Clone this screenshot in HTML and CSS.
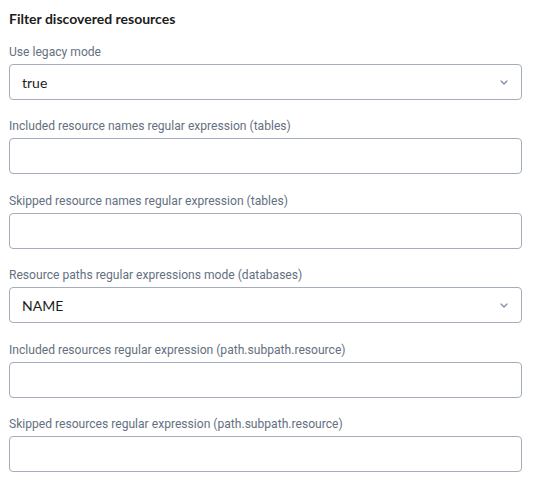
FILE: index.html
```html
<!DOCTYPE html>
<html>
<head>
<meta charset="utf-8">
<link rel="stylesheet" href="styles.css">
</head>
<body>
<div class="panel">
  <h3 class="title">Filter discovered resources</h3>
  <div class="fields">
    <div class="field">
      <label class="label">Use legacy mode</label>
      <div class="control select"><span class="value">true</span>
        <svg class="chev" width="8" height="5" viewBox="0 0 8 5"><path d="M1 1l3 3 3-3" fill="none" stroke="#7a8aa3" stroke-width="1.2" stroke-linecap="round" stroke-linejoin="round"/></svg>
      </div>
    </div>
    <div class="field">
      <label class="label">Included resource names regular expression (tables)</label>
      <div class="control"></div>
    </div>
    <div class="field">
      <label class="label">Skipped resource names regular expression (tables)</label>
      <div class="control"></div>
    </div>
    <div class="field">
      <label class="label">Resource paths regular expressions mode (databases)</label>
      <div class="control select"><span class="value">NAME</span>
        <svg class="chev" width="8" height="5" viewBox="0 0 8 5"><path d="M1 1l3 3 3-3" fill="none" stroke="#7a8aa3" stroke-width="1.2" stroke-linecap="round" stroke-linejoin="round"/></svg>
      </div>
    </div>
    <div class="field">
      <label class="label">Included resources regular expression (path.subpath.resource)</label>
      <div class="control"></div>
    </div>
    <div class="field">
      <label class="label">Skipped resources regular expression (path.subpath.resource)</label>
      <div class="control"></div>
    </div>
  </div>
</div>
</body>
</html>
```
FILE: styles.css
```css
html, body {
  margin: 0;
  padding: 0;
  background: #ffffff;
}
body {
  font-family: Roboto, "Noto Sans", sans-serif;
}
.panel {
  padding: 9px 21px 0 9px;
}
.title {
  margin: 0 0 15px 0;
  font-family: Lato, Roboto, sans-serif;
  font-size: 14px;
  line-height: 20px;
  font-weight: 700;
  color: #1c1d21;
}
.fields {
  display: flex;
  flex-direction: column;
  gap: 18.4px;
}
.field {
  display: flex;
  flex-direction: column;
  gap: 4px;
}
.label {
  font-size: 12.1px;
  line-height: 16px;
  color: #65707f;
}
.control {
  box-sizing: border-box;
  height: 36px;
  border: 1px solid #a3adbb;
  border-radius: 4px;
  display: flex;
  align-items: center;
  padding: 0 13px 0 12px;
}
.select {
  justify-content: space-between;
}
.value {
  font-family: Lato, Roboto, sans-serif;
  font-size: 14px;
  color: #1c1d21;
}
.chev {
  display: block;
}
```
